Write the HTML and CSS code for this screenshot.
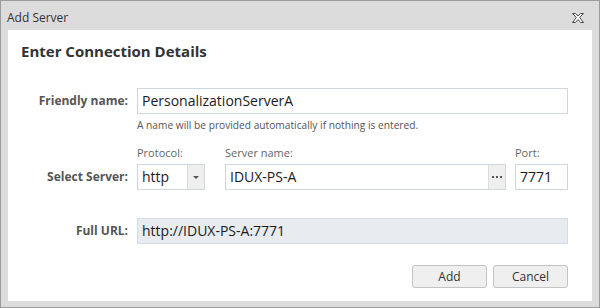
FILE: index.html
```html
<!DOCTYPE html>
<html lang="en">
<head>
    <meta charset="UTF-8">
    <title>Add Server</title>
    <link rel="stylesheet" href="styles.css">
</head>
<body>
    <div class="dialog">
        <div class="titlebar">
            <span class="title">Add Server</span>
            <svg class="close" width="12" height="10" viewBox="0 0 12 10">
                <polygon points="0.5,0.5 3.5,0.5 6,3 8.5,0.5 11.5,0.5 7.7,4.5 11.5,9.5 8.5,9.5 6,6.5 3.5,9.5 0.5,9.5 4.3,4.5" fill="#fff" stroke="#4a4a4a" stroke-width="1"/>
            </svg>
        </div>

        <div class="panel">
            <h2>Enter Connection Details</h2>

            <div class="row">
                <label class="row-label">Friendly name:</label>
                <div class="field">
                    <div class="input">PersonalizationServerA</div>
                    <div class="hint">A name will be provided automatically if nothing is entered.</div>
                </div>
            </div>

            <div class="row server-row">
                <label class="row-label">Select Server:</label>
                <div class="field server-fields">
                    <div class="sub protocol">
                        <span class="sub-label">Protocol:</span>
                        <div class="input combo">
                            <span class="combo-text">http</span>
                            <span class="combo-btn"><span class="arrow"></span></span>
                        </div>
                    </div>
                    <div class="sub server-name">
                        <span class="sub-label">Server name:</span>
                        <div class="input combo">
                            <span class="combo-text">IDUX-PS-A</span>
                            <span class="combo-btn">
                                <svg width="10" height="2" viewBox="0 0 10 2">
                                    <rect x="0" y="0" width="2" height="2" fill="#555"/>
                                    <rect x="4" y="0" width="2" height="2" fill="#555"/>
                                    <rect x="8" y="0" width="2" height="2" fill="#555"/>
                                </svg>
                            </span>
                        </div>
                    </div>
                    <div class="sub port">
                        <span class="sub-label">Port:</span>
                        <div class="input">7771</div>
                    </div>
                </div>
            </div>

            <div class="row url-row">
                <label class="row-label">Full URL:</label>
                <div class="field">
                    <div class="input readonly">http://IDUX-PS-A:7771</div>
                </div>
            </div>

            <div class="buttons">
                <button type="button">Add</button>
                <button type="button">Cancel</button>
            </div>
        </div>
    </div>
</body>
</html>
```

FILE: styles.css
```css
body {
    margin: 0;
    font-family: 'Open Sans', 'Noto Sans', sans-serif;
    color: #333;
}

.dialog {
    width: 600px;
    height: 308px;
    box-sizing: border-box;
    border: 1px solid #9b9b9b;
    background-color: #dcdcdc;
    display: flex;
    flex-direction: column;
}

.titlebar {
    height: 29px;
    display: flex;
    align-items: center;
    justify-content: space-between;
    padding: 0 15px 0 6px;
}

.title {
    font-size: 12px;
    color: #333;
    margin-top: 4px;
}

.close {
    margin-top: 5px;
}

.panel {
    flex: 1;
    background-color: #ffffff;
    margin: 0 7px 6px 7px;
    padding: 11px 24px 0 13px;
}

.panel h2 {
    margin: 0 0 27px 0;
    font-size: 15px;
    line-height: 20px;
    font-weight: 700;
    color: #333;
}

.row {
    display: flex;
    align-items: flex-start;
}

.row-label {
    width: 107px;
    flex-shrink: 0;
    margin-right: 9px;
    text-align: right;
    font-size: 12px;
    font-weight: 700;
    line-height: 26px;
    color: #555;
}

.field {
    flex: 1;
}

.input {
    height: 26px;
    box-sizing: border-box;
    border: 1px solid #cfd6de;
    padding: 0 4px;
    font-size: 14px;
    line-height: 24px;
    color: #1a1a1a;
    background-color: #fff;
}

.hint {
    margin-top: 4px;
    font-size: 10.2px;
    line-height: 14px;
    color: #555;
}

.server-row {
    margin-top: 14px;
    align-items: flex-end;
}

.server-fields {
    display: flex;
}

.sub {
    display: flex;
    flex-direction: column;
}

.sub-label {
    font-size: 11px;
    line-height: 14px;
    color: #666;
    margin-bottom: 4px;
}

.protocol {
    width: 68px;
    margin-right: 20px;
}

.server-name {
    width: 281px;
    margin-right: 9px;
}

.port {
    flex: 1;
}

.combo {
    display: flex;
    padding: 0;
}

.combo-text {
    flex: 1;
    padding: 0 4px;
}

.combo-btn {
    width: 16px;
    border-left: 1px solid #d8dde2;
    background-color: #efefef;
    display: flex;
    align-items: center;
    justify-content: center;
}

.arrow {
    width: 0;
    height: 0;
    border-left: 3px solid transparent;
    border-right: 3px solid transparent;
    border-top: 3px solid #555;
}

.url-row {
    margin-top: 28px;
}

.readonly {
    background-color: #e8ecf0;
    border-color: #d5dce3;
}

.buttons {
    display: flex;
    justify-content: flex-end;
    gap: 6px;
    margin-top: 21px;
}

.buttons button {
    width: 75px;
    height: 23px;
    padding: 0;
    border: 1px solid #c3c3c3;
    border-radius: 3px;
    background-color: #efefef;
    font-family: 'Open Sans', 'Noto Sans', sans-serif;
    font-size: 12px;
    color: #333;
}
```
